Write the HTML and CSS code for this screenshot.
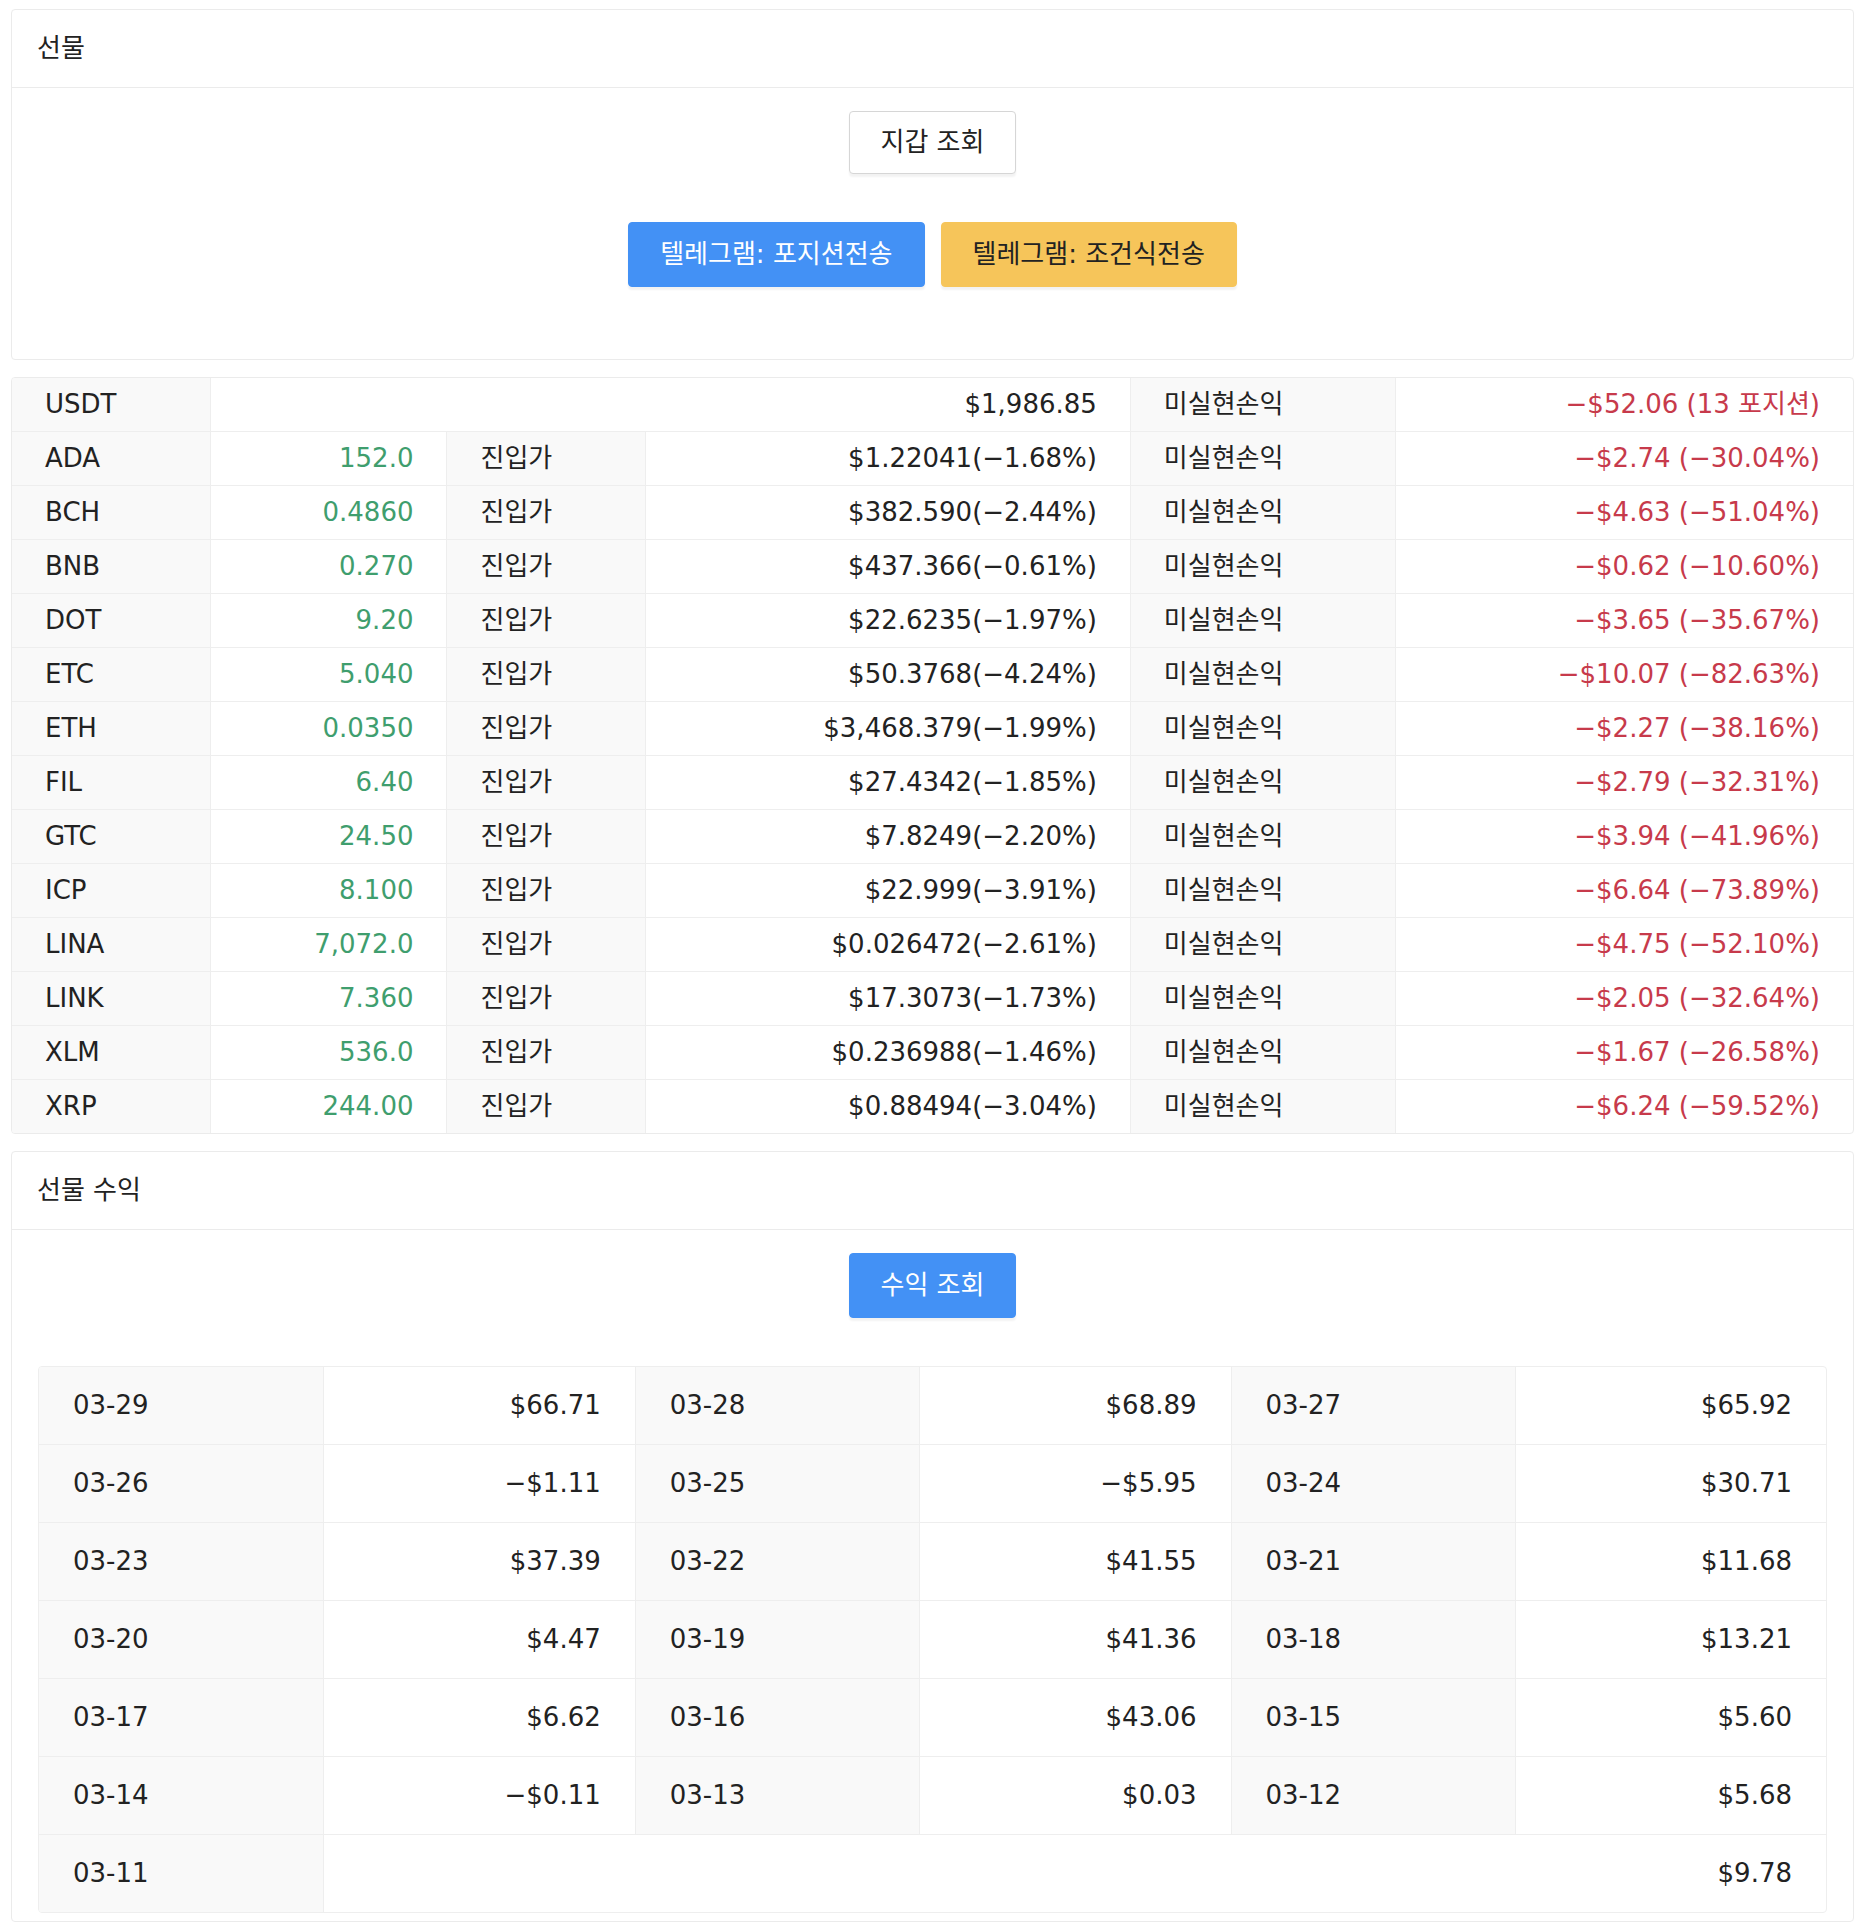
FILE: index.html
```html
<!DOCTYPE html>
<html lang="ko">
<head>
  <meta charset="UTF-8">
  <title>선물</title>
  <meta name="viewport" content="width=device-width,initial-scale=1">
  <link rel="stylesheet" href="styles.css">
</head>
<body>

  <!-- 선물: 지갑 / 텔레그램 -->
  <div class="card">
    <div class="card-header">선물</div>
    <div class="card-body">
      <div class="btn-row">
        <button class="btn btn-light">지갑 조회</button>
      </div>
      <div class="btn-row">
        <button class="btn btn-blue">텔레그램: 포지션전송</button>
        <button class="btn btn-yellow">텔레그램: 조건식전송</button>
      </div>
    </div>
  </div>

  <!-- 포지션 목록 -->
  <div class="card">
    <table class="grid positions">
      <colgroup>
        <col style="width:10.74%">
        <col style="width:12.86%">
        <col style="width:10.8%">
        <col style="width:26.32%">
        <col style="width:14.38%">
        <col style="width:24.9%">
      </colgroup>
      <tr>
        <td class="label">USDT</td>
        <td colspan="3" class="num">$1,986.85</td>
        <td class="label">미실현손익</td>
        <td class="num red">−$52.06 (13 포지션)</td>
      </tr>
      <tr><td class="label">ADA</td><td class="num green">152.0</td><td class="label">진입가</td><td class="num">$1.22041(−1.68%)</td><td class="label">미실현손익</td><td class="num red">−$2.74 (−30.04%)</td></tr>
      <tr><td class="label">BCH</td><td class="num green">0.4860</td><td class="label">진입가</td><td class="num">$382.590(−2.44%)</td><td class="label">미실현손익</td><td class="num red">−$4.63 (−51.04%)</td></tr>
      <tr><td class="label">BNB</td><td class="num green">0.270</td><td class="label">진입가</td><td class="num">$437.366(−0.61%)</td><td class="label">미실현손익</td><td class="num red">−$0.62 (−10.60%)</td></tr>
      <tr><td class="label">DOT</td><td class="num green">9.20</td><td class="label">진입가</td><td class="num">$22.6235(−1.97%)</td><td class="label">미실현손익</td><td class="num red">−$3.65 (−35.67%)</td></tr>
      <tr><td class="label">ETC</td><td class="num green">5.040</td><td class="label">진입가</td><td class="num">$50.3768(−4.24%)</td><td class="label">미실현손익</td><td class="num red">−$10.07 (−82.63%)</td></tr>
      <tr><td class="label">ETH</td><td class="num green">0.0350</td><td class="label">진입가</td><td class="num">$3,468.379(−1.99%)</td><td class="label">미실현손익</td><td class="num red">−$2.27 (−38.16%)</td></tr>
      <tr><td class="label">FIL</td><td class="num green">6.40</td><td class="label">진입가</td><td class="num">$27.4342(−1.85%)</td><td class="label">미실현손익</td><td class="num red">−$2.79 (−32.31%)</td></tr>
      <tr><td class="label">GTC</td><td class="num green">24.50</td><td class="label">진입가</td><td class="num">$7.8249(−2.20%)</td><td class="label">미실현손익</td><td class="num red">−$3.94 (−41.96%)</td></tr>
      <tr><td class="label">ICP</td><td class="num green">8.100</td><td class="label">진입가</td><td class="num">$22.999(−3.91%)</td><td class="label">미실현손익</td><td class="num red">−$6.64 (−73.89%)</td></tr>
      <tr><td class="label">LINA</td><td class="num green">7,072.0</td><td class="label">진입가</td><td class="num">$0.026472(−2.61%)</td><td class="label">미실현손익</td><td class="num red">−$4.75 (−52.10%)</td></tr>
      <tr><td class="label">LINK</td><td class="num green">7.360</td><td class="label">진입가</td><td class="num">$17.3073(−1.73%)</td><td class="label">미실현손익</td><td class="num red">−$2.05 (−32.64%)</td></tr>
      <tr><td class="label">XLM</td><td class="num green">536.0</td><td class="label">진입가</td><td class="num">$0.236988(−1.46%)</td><td class="label">미실현손익</td><td class="num red">−$1.67 (−26.58%)</td></tr>
      <tr><td class="label">XRP</td><td class="num green">244.00</td><td class="label">진입가</td><td class="num">$0.88494(−3.04%)</td><td class="label">미실현손익</td><td class="num red">−$6.24 (−59.52%)</td></tr>
    </table>
  </div>

  <!-- 선물 수익 -->
  <div class="card last">
    <div class="card-header">선물 수익</div>
    <div class="card-body">
      <div class="btn-row">
        <button class="btn btn-blue">수익 조회</button>
      </div>
      <div class="box">
        <table class="grid profits">
          <colgroup>
            <col style="width:15.92%">
            <col style="width:17.42%">
            <col style="width:15.92%">
            <col style="width:17.42%">
            <col style="width:15.92%">
            <col style="width:17.4%">
          </colgroup>
          <tr><td class="label">03-29</td><td class="num">$66.71</td><td class="label">03-28</td><td class="num">$68.89</td><td class="label">03-27</td><td class="num">$65.92</td></tr>
          <tr><td class="label">03-26</td><td class="num">−$1.11</td><td class="label">03-25</td><td class="num">−$5.95</td><td class="label">03-24</td><td class="num">$30.71</td></tr>
          <tr><td class="label">03-23</td><td class="num">$37.39</td><td class="label">03-22</td><td class="num">$41.55</td><td class="label">03-21</td><td class="num">$11.68</td></tr>
          <tr><td class="label">03-20</td><td class="num">$4.47</td><td class="label">03-19</td><td class="num">$41.36</td><td class="label">03-18</td><td class="num">$13.21</td></tr>
          <tr><td class="label">03-17</td><td class="num">$6.62</td><td class="label">03-16</td><td class="num">$43.06</td><td class="label">03-15</td><td class="num">$5.60</td></tr>
          <tr><td class="label">03-14</td><td class="num">−$0.11</td><td class="label">03-13</td><td class="num">$0.03</td><td class="label">03-12</td><td class="num">$5.68</td></tr>
          <tr><td class="label">03-11</td><td colspan="5" class="num">$9.78</td></tr>
        </table>
      </div>
    </div>
  </div>

</body>
</html>
```

FILE: styles.css
```css
* { box-sizing: border-box; }
body {
  font-family: 'DejaVu Sans', 'Noto Sans CJK KR', sans-serif;
  font-size: 26px;
  line-height: 31px;
  color: #222;
  margin: 0;
  padding: 9px 20px 0 11px;
  background: #fff;
}

/* -------- 카드 -------- */
.card {
  border: 1px solid #ebebeb;
  border-radius: 4px;
  background: #fff;
  margin-bottom: 17px;
  overflow: hidden;
}
.card.last {
  margin-bottom: 0;
}
.card-header {
  padding: 23px 25px;
  border-bottom: 1px solid #ebebeb;
}
.card-body {
  padding: 23px 26px 24px;
}
.card.last .card-body {
  padding-bottom: 8px;
}

/* -------- 버튼 -------- */
.btn-row {
  display: flex;
  justify-content: center;
  gap: 16px;
  margin-bottom: 48px;
}
.btn {
  font: inherit;
  border: 1px solid transparent;
  border-radius: 4px;
  padding: 15px 31px;
  cursor: pointer;
  box-shadow: 0 3px 2px rgba(0,0,0,0.05);
}
.btn-light {
  background: #fff;
  border-color: #d6d6d6;
  color: #222;
}
.btn-blue {
  background: #4391f5;
  border-color: #4391f5;
  color: #fff;
  padding: 16px 31px;
}
.btn-yellow {
  background: #f6c55a;
  border-color: #f6c55a;
  color: #222;
  padding: 16px 31px;
}

/* -------- 표 -------- */
.grid {
  width: 100%;
  border-collapse: separate;
  border-spacing: 0;
  table-layout: fixed;
}
.grid td {
  border-bottom: 1px solid #eeeeee;
  border-left: 1px solid #eeeeee;
  white-space: nowrap;
}
.grid td:first-child {
  border-left: 0;
}
.grid tr:last-child td {
  border-bottom: 0;
}
.positions td {
  padding: 11px 33px;
}
.profits td {
  padding: 23px 34px;
}
.label {
  background: #f9f9f9;
}
.num {
  text-align: right;
}
.green { color: #3f9e6e; }
.red { color: #c73a4b; }

.box {
  border: 1px solid #eeeeee;
  border-radius: 4px;
  overflow: hidden;
}
```
